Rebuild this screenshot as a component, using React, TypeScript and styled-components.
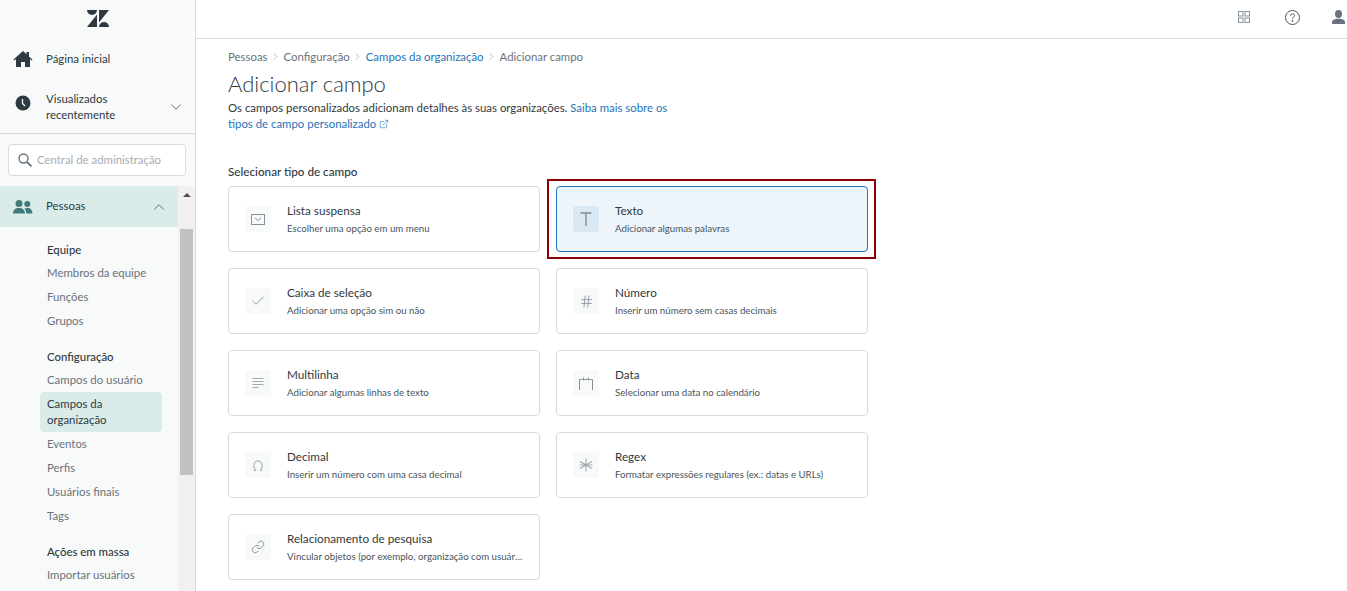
import React from "react"
import styled, { createGlobalStyle } from "styled-components"
import { ChevronDown, ChevronUp, ChevronRight, Check, Hash, Link, ExternalLink } from "lucide-react"

const Global = createGlobalStyle`
    html, body {
        margin: 0;
        height: 100%;
        overflow: hidden;
        background: #fff;
    }
    body {
        font-family: Lato, "Noto Sans", sans-serif;
        color: #2f3941;
    }
    * { box-sizing: border-box; }
`;

const Page = styled.div`
    display: flex;
    height: 591px;
    overflow: hidden;
`;

const Sidebar = styled.aside`
    width: 196px;
    flex: none;
    display: flex;
    flex-direction: column;
    background: #f8f9f9;
    border-right: 1px solid #d8dcde;
    overflow: hidden;
`;

const LogoRow = styled.div`
    height: 36px;
    display: flex;
    align-items: center;
    justify-content: center;
    color: #2f3941;
    flex: none;
`;

const TopNav = styled.div`
    height: 98px;
    flex: none;
    display: flex;
    flex-direction: column;
    border-bottom: 1px solid #d8dcde;
`;

const TopItem = styled.div<{ $h: number }>`
    height: ${p => p.$h}px;
    display: flex;
    align-items: center;
    padding: 0 10px 0 13px;
    font-size: 11.4px;
    line-height: 16px;
    color: #2f3941;
`;

const NavIcon = styled.span<{ $lift?: number }>`
    width: 20px;
    margin-right: 13px;
    margin-bottom: ${p => p.$lift ?? 0}px;
    flex: none;
    display: flex;
    justify-content: center;
`;

const NavLabel = styled.span`
    flex: 1;
`;

const SearchWrap = styled.div`
    height: 52px;
    flex: none;
    padding: 10px 9px 10px 8px;
`;

const SearchBox = styled.div`
    height: 32px;
    background: #fff;
    border: 1px solid #d8dcde;
    border-radius: 4px;
    display: flex;
    align-items: center;
    gap: 5px;
    padding: 0 9px;
    font-size: 11.4px;
    color: #a8adb1;
    white-space: nowrap;
`;

const SearchHint = styled.span`
    margin-bottom: 2px;
`;

const ScrollArea = styled.div`
    flex: 1;
    display: flex;
    min-height: 0;
`;

const NavColumn = styled.div`
    width: 178px;
    flex: none;
`;

const ActiveSection = styled.div`
    height: 41px;
    display: flex;
    align-items: center;
    padding: 0 10px 0 13px;
    background: #d9ecea;
    font-size: 11.4px;
`;

const ActiveLabel = styled(NavLabel)`
    margin-bottom: 2px;
`;

const SubNav = styled.div`
    padding: 12px 16px 0 40px;
`;

const GroupTitle = styled.div<{ $gap?: boolean }>`
    font-size: 11.4px;
    font-weight: 500;
    height: 22px;
    line-height: 22px;
    padding-left: 7px;
    color: #2f3941;
    margin-top: ${p => (p.$gap ? 13 : 0)}px;
`;

const SubItem = styled.div<{ $active?: boolean }>`
    font-size: 11.4px;
    line-height: 16px;
    padding: 4px 7px;
    border-radius: 4px;
    color: ${p => (p.$active ? "#2f3941" : "#68737d")};
    background: ${p => (p.$active ? "#d9ecea" : "transparent")};
`;

const ScrollTrack = styled.div`
    width: 17px;
    flex: none;
    background: #f1f1f1;
    display: flex;
    flex-direction: column;
    align-items: center;
`;

const ScrollArrow = styled.div`
    height: 17px;
    display: flex;
    align-items: center;
    justify-content: center;
    width: 100%;
    &::before {
        content: "";
        border-left: 4px solid transparent;
        border-right: 4px solid transparent;
        border-bottom: 4px solid #505050;
    }
`;

const ScrollThumb = styled.div`
    width: 13px;
    height: 246px;
    margin-top: 26px;
    background: #c1c1c1;
`;

const Main = styled.main`
    flex: 1;
    min-width: 0;
    display: flex;
    flex-direction: column;
`;

const Header = styled.header`
    height: 39px;
    flex: none;
    border-bottom: 1px solid #d8dcde;
    display: flex;
    align-items: center;
    justify-content: flex-end;
    color: #68737d;
    padding: 0 1px 4px 0;
`;

const HeaderIcon = styled.span<{ $mr: number }>`
    display: flex;
    margin-right: ${p => p.$mr}px;
`;

const Content = styled.div`
    padding: 9px 0 0 32px;
`;

const Breadcrumb = styled.nav`
    display: flex;
    align-items: center;
    height: 16px;
    font-size: 11.4px;
    color: #68737d;
    gap: 2.5px;
`;

const Crumb = styled.span<{ $link?: boolean }>`
    color: ${p => (p.$link ? "#1f73b7" : "#68737d")};
`;

const Title = styled.h1`
    margin: 4px 0 0;
    font-size: 22px;
    font-weight: 300;
    line-height: 32px;
    color: #2f3941;
`;

const Description = styled.p`
    margin: 0;
    width: 445px;
    font-size: 11.4px;
    line-height: 16px;
    color: #2f3941;
`;

const DocLink = styled.a`
    color: #1f73b7;
    svg { vertical-align: -1px; margin-left: 3px; }
`;

const Label = styled.div`
    margin-top: 31px;
    font-size: 11.7px;
    font-weight: 500;
    line-height: 16px;
    color: #2f3941;
`;

const CardGrid = styled.div`
    display: grid;
    grid-template-columns: 312px 312px;
    grid-auto-rows: 66px;
    gap: 16px;
    margin-top: 7px;
`;

const Card = styled.div<{ $selected?: boolean }>`
    position: relative;
    display: flex;
    align-items: center;
    padding: 0 16px;
    border-radius: 4px;
    border: 1px solid ${p => (p.$selected ? "#1f73b7" : "#d8dcde")};
    background: ${p => (p.$selected ? "#edf4fa" : "#fff")};
`;

const Highlight = styled.div`
    position: absolute;
    inset: -8px -9px -8px -10px;
    border: 2px solid #8b0000;
    pointer-events: none;
`;

const IconBox = styled.div<{ $selected?: boolean }>`
    width: 26px;
    height: 26px;
    flex: none;
    margin-right: 16px;
    border-radius: 3px;
    display: flex;
    align-items: center;
    justify-content: center;
    color: #87929d;
    background: ${p => (p.$selected ? "#d9e8f3" : "#f8f9f9")};
`;

const CardText = styled.div`
    min-width: 0;
    flex: 1;
    padding-bottom: 2px;
`;

const CardTitle = styled.div`
    font-size: 11.7px;
    line-height: 16px;
    color: #2f3941;
`;

const CardDesc = styled.div`
    font-size: 9.7px;
    line-height: 14px;
    margin-top: 3px;
    color: #49545c;
    white-space: nowrap;
    overflow: hidden;
    text-overflow: ellipsis;
`;

const ZendeskLogo = () => (
    <svg width="22" height="17" viewBox="0 0 22 17" fill="currentColor">
        <path d="M10 4.500V17H0z" />
        <path d="M10 0a5 5 0 0 1-10 0z" />
        <path d="M12 12.500V0h10z" />
        <path d="M12 17a5 5 0 0 1 10 0z" />
    </svg>
);

const HomeIcon = () => (
    <svg width="20" height="16" viewBox="0 0 20 16" fill="#2f3941">
        <path d="M10 0 .5 8.400l.9 1L3 8v8h5v-5h4v5h5V8l1.600 1.400.9-1-3.500-3V1h-2.500v2.200z" />
    </svg>
);

const ClockIcon = () => (
    <svg width="16" height="16" viewBox="0 0 16 16">
        <circle cx="8" cy="8" r="7.500" fill="#2f3941" />
        <path d="M7.500 4v4.500l2.500 2.500" stroke="#f8f9f9" strokeWidth="1.300" fill="none" />
    </svg>
);

const PeopleIcon = () => (
    <svg width="20" height="14" viewBox="0 0 20 14" fill="#3d7a78">
        <circle cx="6" cy="3.500" r="3.500" />
        <path d="M0 13.500c0-3.500 2.400-5.500 6-5.500s6 2 6 5.500z" />
        <circle cx="14.300" cy="4" r="3" />
        <path d="M13.200 13.500c0-2.200-.6-3.800-1.800-5 .9-.4 1.900-.6 3-.6 3 0 5 1.800 5.100 5.600z" />
    </svg>
);

const SearchIcon = () => (
    <svg width="14" height="14" viewBox="0 0 14 14" fill="none" stroke="#68737d">
        <circle cx="5.500" cy="5.500" r="4.500" strokeWidth="1.400" />
        <path d="M9 9l4.500 4.500" strokeWidth="1.800" />
    </svg>
);

const GridIcon = () => (
    <svg width="12" height="12" viewBox="0 0 12 12" fill="none" stroke="#87929d">
        <rect x=".5" y=".5" width="4.500" height="4.500" />
        <rect x="7" y=".5" width="4.500" height="4.500" />
        <rect x=".5" y="7" width="4.500" height="4.500" />
        <rect x="7" y="7" width="4.500" height="4.500" />
    </svg>
);

const HelpIcon = () => (
    <svg width="15" height="15" viewBox="0 0 15 15" fill="none" stroke="#49545c">
        <circle cx="7.500" cy="7.500" r="7" />
        <path d="M5.500 5.800c0-1.200.9-1.900 2-1.900s2 .7 2 1.800c0 1.500-2 1.500-2 3.100" />
        <circle cx="7.500" cy="11" r=".5" fill="#49545c" />
    </svg>
);

const UserIcon = () => (
    <svg width="13" height="14" viewBox="0 0 13 14" fill="#68737d">
        <ellipse cx="6.500" cy="4" rx="3.500" ry="4" />
        <path d="M0 14v-2c0-2 2.500-2.700 4.500-3.300h4c2 .6 4.500 1.300 4.500 3.300v2z" />
    </svg>
);

const DropdownGlyph = () => (
    <svg width="14" height="11" viewBox="0 0 14 11" fill="none" stroke="#87929d">
        <rect x=".5" y=".5" width="13" height="10" />
        <path d="M4 4l3 2.500L10 4" />
    </svg>
);

const TextGlyph = () => (
    <svg width="12" height="14" viewBox="0 0 12 14" fill="none" stroke="#7d8a96" strokeWidth="1.300">
        <path d="M.5 1h11M6 1v13" />
    </svg>
);

const LinesGlyph = () => (
    <svg width="12" height="12" viewBox="0 0 12 12" fill="none" stroke="#a3abb2">
        <path d="M.5 1.500h11M.5 4.500h11M.5 7.500h11M.5 10.500h6" />
    </svg>
);

const CalendarGlyph = () => (
    <svg width="14" height="13" viewBox="0 0 14 13" fill="none" stroke="#87929d">
        <path d="M.5 13V2.500h3M10.500 2.500h3V13M5 2.500h4M4.500 .5v3M9.500 .5v3" />
    </svg>
);

const OmegaGlyph = () => (
    <svg width="10" height="11" viewBox="0 0 12 13" fill="none" stroke="#87929d" strokeWidth="1.100">
        <path d="M1 12.500h2v-1C1.800 10.500 1 8.800 1 6.500 1 3.400 3.200 1 6 1s5 2.400 5 5.500c0 2.300-.8 4-2 5v1h2" />
    </svg>
);

const AsteriskGlyph = () => (
    <svg width="14" height="14" viewBox="0 0 14 14" fill="none" stroke="#a3abb2" strokeWidth="1.100">
        <path d="M7 .5v13M1 3.500l12 7M13 3.500l-12 7M.5 7h13" />
    </svg>
);

const fields = [
    { title: "Lista suspensa", desc: "Escolher uma opção em um menu", icon: <DropdownGlyph /> },
    { title: "Texto", desc: "Adicionar algumas palavras", icon: <TextGlyph />, selected: true },
    { title: "Caixa de seleção", desc: "Adicionar uma opção sim ou não", icon: <Check size={16} strokeWidth={1.3} /> },
    { title: "Número", desc: "Inserir um número sem casas decimais", icon: <Hash size={15} strokeWidth={1.4} /> },
    { title: "Multilinha", desc: "Adicionar algumas linhas de texto", icon: <LinesGlyph /> },
    { title: "Data", desc: "Selecionar uma data no calendário", icon: <CalendarGlyph /> },
    { title: "Decimal", desc: "Inserir um número com uma casa decimal", icon: <OmegaGlyph /> },
    { title: "Regex", desc: "Formatar expressões regulares (ex.: datas e URLs)", icon: <AsteriskGlyph /> },
    { title: "Relacionamento de pesquisa", desc: "Vincular objetos (por exemplo, organização com usuário e usuário com ticket)", icon: <Link size={14} strokeWidth={1.6} /> },
];

const App: React.FC = () => {

    return (
        <Page>
            <Global />
            <Sidebar>
                <LogoRow><ZendeskLogo /></LogoRow>
                <TopNav>
                    <TopItem $h={46}>
                        <NavIcon><HomeIcon /></NavIcon>
                        <NavLabel>Página inicial</NavLabel>
                    </TopItem>
                    <TopItem $h={50}>
                        <NavIcon $lift={9}><ClockIcon /></NavIcon>
                        <NavLabel>Visualizados<br />recentemente</NavLabel>
                        <ChevronDown size={18} strokeWidth={1.1} color="#49545c" />
                    </TopItem>
                </TopNav>
                <SearchWrap>
                    <SearchBox>
                        <SearchIcon />
                        <SearchHint>Central de administração</SearchHint>
                    </SearchBox>
                </SearchWrap>
                <ScrollArea>
                    <NavColumn>
                        <ActiveSection>
                            <NavIcon><PeopleIcon /></NavIcon>
                            <ActiveLabel>Pessoas</ActiveLabel>
                            <ChevronUp size={18} strokeWidth={1.1} color="#49545c" />
                        </ActiveSection>
                        <SubNav>
                            <GroupTitle>Equipe</GroupTitle>
                            <SubItem>Membros da equipe</SubItem>
                            <SubItem>Funções</SubItem>
                            <SubItem>Grupos</SubItem>
                            <GroupTitle $gap>Configuração</GroupTitle>
                            <SubItem>Campos do usuário</SubItem>
                            <SubItem $active>Campos da<br />organização</SubItem>
                            <SubItem>Eventos</SubItem>
                            <SubItem>Perfis</SubItem>
                            <SubItem>Usuários finais</SubItem>
                            <SubItem>Tags</SubItem>
                            <GroupTitle $gap>Ações em massa</GroupTitle>
                            <SubItem>Importar usuários</SubItem>
                        </SubNav>
                    </NavColumn>
                    <ScrollTrack>
                        <ScrollArrow />
                        <ScrollThumb />
                    </ScrollTrack>
                </ScrollArea>
            </Sidebar>
            <Main>
                <Header>
                    <HeaderIcon $mr={35}><GridIcon /></HeaderIcon>
                    <HeaderIcon $mr={32}><HelpIcon /></HeaderIcon>
                    <HeaderIcon $mr={1}><UserIcon /></HeaderIcon>
                </Header>
                <Content>
                    <Breadcrumb>
                        <Crumb>Pessoas</Crumb>
                        <ChevronRight size={11} strokeWidth={1} />
                        <Crumb>Configuração</Crumb>
                        <ChevronRight size={11} strokeWidth={1} />
                        <Crumb $link>Campos da organização</Crumb>
                        <ChevronRight size={11} strokeWidth={1} />
                        <Crumb>Adicionar campo</Crumb>
                    </Breadcrumb>
                    <Title>Adicionar campo</Title>
                    <Description>
                        Os campos personalizados adicionam detalhes às suas organizações.{" "}
                        <DocLink>
                            Saiba mais sobre os tipos de campo personalizado
                            <ExternalLink size={10} strokeWidth={1.4} />
                        </DocLink>
                    </Description>
                    <Label>Selecionar tipo de campo</Label>
                    <CardGrid>
                        {fields.map(f => (
                            <Card key={f.title} $selected={f.selected}>
                                <IconBox $selected={f.selected}>{f.icon}</IconBox>
                                <CardText>
                                    <CardTitle>{f.title}</CardTitle>
                                    <CardDesc>{f.desc}</CardDesc>
                                </CardText>
                                {f.selected && <Highlight />}
                            </Card>
                        ))}
                    </CardGrid>
                </Content>
            </Main>
        </Page>
    )

}

export default App;
